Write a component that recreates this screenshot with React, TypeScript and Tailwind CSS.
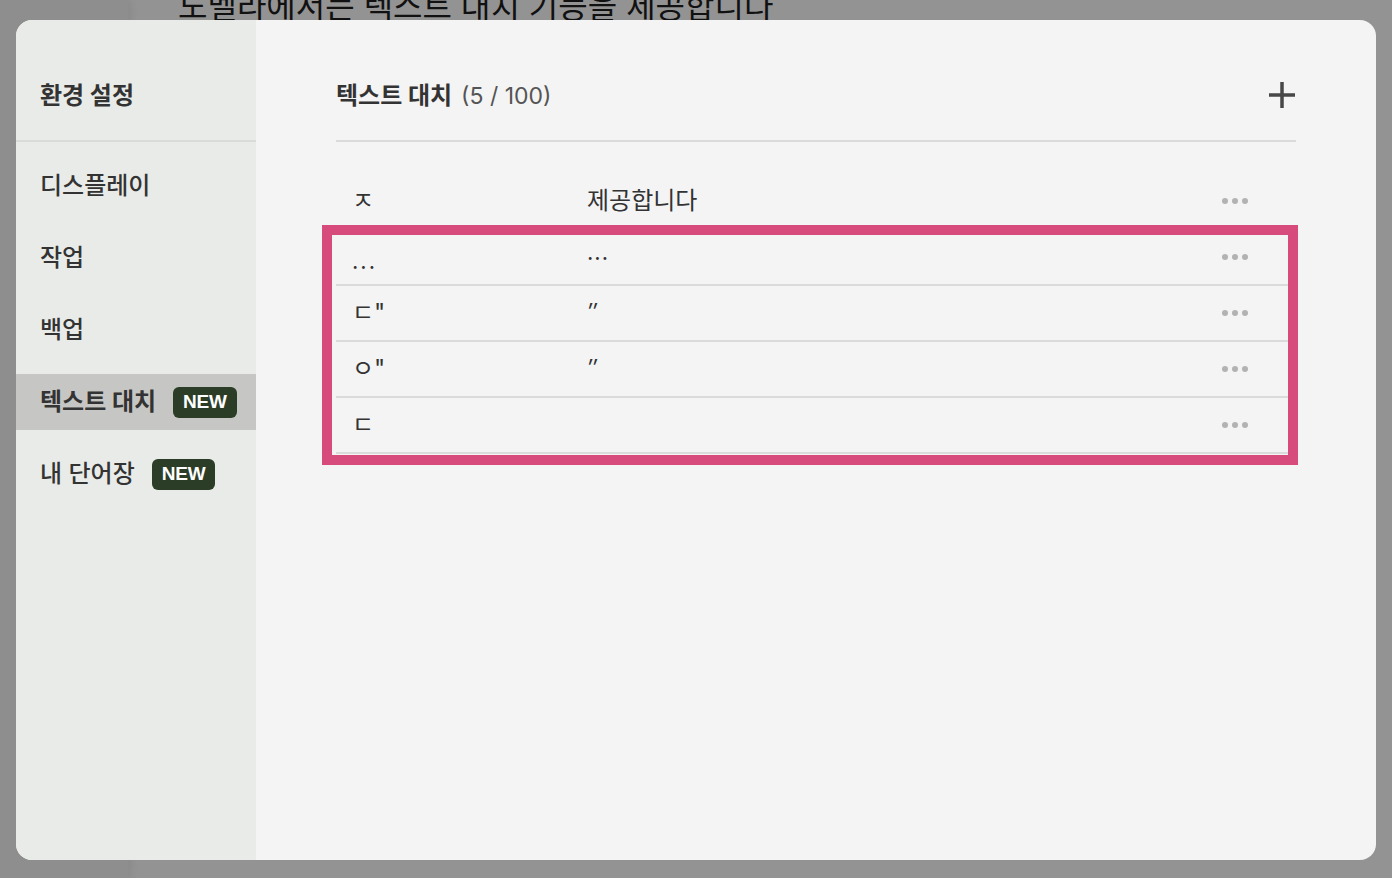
import React from 'react';

const FONT = '"Inter", "Noto Sans CJK KR", "Noto Sans", sans-serif';

type Entry = { from: string; to: string };

const entries: Entry[] = [
    { from: 'ㅈ', to: '제공합니다' },
    { from: '...', to: '···' },
    { from: 'ㄷ"', to: '″' },
    { from: 'ㅇ"', to: '″' },
    { from: 'ㄷ', to: '' },
];

const menu = [
    { label: '디스플레이' },
    { label: '작업' },
    { label: '백업' },
    { label: '텍스트 대치', isNew: true, active: true },
    { label: '내 단어장', isNew: true },
];

const NewBadge = () => (
    <span className="ml-[17px] inline-flex h-[31px] items-center rounded-md bg-[#2c3d27] px-[10px] text-[19px] font-bold tracking-[-0.01em] text-white" style={{ fontFamily: '"Liberation Sans", Arial, sans-serif' }}>
        NEW
    </span>
);

const MoreDots = () => (
    <div className="flex items-center gap-[4px]">
        <span className="h-[6px] w-[6px] rounded-full bg-[#b2b2b2]" />
        <span className="h-[6px] w-[6px] rounded-full bg-[#b2b2b2]" />
        <span className="h-[6px] w-[6px] rounded-full bg-[#b2b2b2]" />
    </div>
);

export default function App() {
    return (
        <div className="relative h-[878px] w-[1392px] overflow-hidden bg-[#939393]" style={{ fontFamily: FONT }}>
            {/* page behind the dimmed overlay */}
            <div className="flex h-full">
                <div className="h-full w-[128px] bg-[#8e8e8e] shadow-[2px_0_8px_rgba(0,0,0,0.08)]" />
                <div className="flex-1 pl-[50px]">
                    <p className="-mt-[13px] whitespace-nowrap text-[32px] leading-[40px] text-[#111]">노벨라에서는 텍스트 대치 기능을 제공합니다</p>
                </div>
            </div>

            {/* settings modal */}
            <div className="absolute left-[16px] top-[20px] flex h-[840px] w-[1360px] overflow-hidden rounded-2xl bg-[#f4f4f4]">
                <aside className="flex w-[240px] shrink-0 flex-col bg-[#e9ebe8]">
                    <div className="flex h-[122px] items-end border-b-2 border-[#d9dbd8] px-6 pb-[28px]">
                        <h2 className="whitespace-nowrap text-[24px] font-bold leading-[32px] text-[#333]">환경 설정</h2>
                    </div>
                    <nav className="flex flex-col gap-4 pt-[16px]">
                        {menu.map((m) => (
                            <div
                                key={m.label}
                                className={`flex h-14 items-center whitespace-nowrap px-6 text-[24px] text-[#333] ${m.active ? 'bg-[#c6c7c4] font-bold' : 'font-medium'}`}
                            >
                                <span>{m.label}</span>
                                {m.isNew && <NewBadge />}
                            </div>
                        ))}
                    </nav>
                </aside>

                <main className="flex-1 px-20">
                    <div className="flex h-[122px] items-end justify-between border-b-2 border-[#dadada] pb-[28px]">
                        <h1 className="flex items-baseline whitespace-nowrap leading-[32px] text-[#333]">
                            <span className="text-[24px] font-bold">텍스트 대치</span>
                            <span className="ml-[9px] text-[23px] text-[#555]">(5 / 100)</span>
                        </h1>
                        <svg width="28" height="28" viewBox="0 0 28 28" className="mb-[3px]">
                            <path d="M14 1v26M1 14h26" stroke="#474747" strokeWidth="3.5" />
                        </svg>
                    </div>

                    <div className="relative mt-[32px]">
                        {entries.map((e, i) => (
                            <div key={i} className="flex h-14 items-center border-b-2 border-[#dadada] pl-4 pr-12 text-[24px] text-[#333]">
                                <div className="w-[235px] shrink-0">
                                    <span className={i === 1 ? 'relative top-[4px] text-[22px] tracking-[2px]' : ''}>{e.from}</span>
                                </div>
                                <div className="flex-1">
                                    <span className={i === 1 ? 'relative top-[1px] text-[22px] tracking-[1px]' : i > 1 ? 'relative -top-[2px] text-[22px] italic' : ''}>{e.to}</span>
                                </div>
                                <MoreDots />
                            </div>
                        ))}
                        {/* highlight annotation */}
                        <div className="pointer-events-none absolute left-[-14px] top-[51px] h-[240px] w-[976px] border-[10px] border-[#d64b7b]" />
                    </div>
                </main>
            </div>
        </div>
    );
}
